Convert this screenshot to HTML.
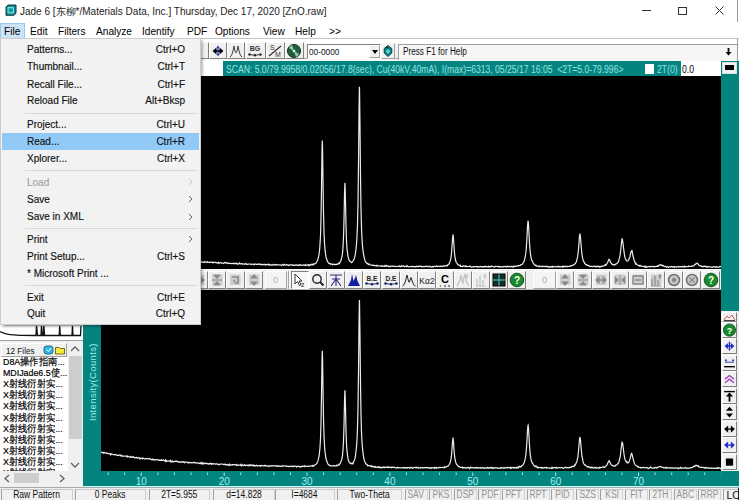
<!DOCTYPE html>
<html><head><meta charset="utf-8">
<style>
*{margin:0;padding:0;box-sizing:border-box}
html,body{width:739px;height:500px;overflow:hidden;background:#fff;font-family:"Liberation Sans",sans-serif;color:#000}
.a{position:absolute}
.t{position:absolute;white-space:nowrap;line-height:1}
#title{left:0;top:0;width:739px;height:22px;background:#fff}
#menubar{left:0;top:22px;width:739px;height:17px;background:#fff}
#toolbar{left:0;top:38px;width:739px;height:23px;background:linear-gradient(#fff 0,#fff 5px,#f0f0f0 5px,#f0f0f0 20px,#f8f8f8 20px);border-top:1px solid #c4c4c4}
#frame{left:82px;top:61px;width:657px;height:426px;background:#04847f;border-left:1px solid #bff;border-bottom:1px solid #bff}
.blk{background:#000}
.btn{position:absolute;background:#f0f0f0;border:1px solid;border-color:#fff #a0a0a0 #a0a0a0 #fff}
.narrow{font-family:"Liberation Sans",sans-serif;transform-origin:0 0}
#status{left:0;top:487px;width:739px;height:13px;background:#f0f0f0;border-top:1px solid #a8a8a8}
.sb{position:absolute;top:1px;height:12px;border-left:1px solid #a0a0a0;border-right:1px solid #d0d0d0;border-top:1px solid #c8c8c8;font-size:10px;text-align:center;line-height:10px;color:#000;overflow:hidden}
.sb span{display:inline-block;transform:scaleX(0.85)}
#menu{left:0;top:38px;width:201px;height:287px;background:#f2f2f2;border:1px solid #cccccc;box-shadow:2px 2px 2px rgba(0,0,0,0.25)}
.mi{position:absolute;left:1px;width:197px;height:17px}
.mb{font-size:11px;transform:scaleX(0.92);transform-origin:0 0}
.mt{font-size:10px;-webkit-text-stroke:0.15px currentColor}
.mi .l{position:absolute;left:26px;top:3px}
.mi .r{position:absolute;right:15px;top:3px}
.mi .ar{position:absolute;left:187px;top:3px;color:#888}
.mi.hl{background:#91c9f7}
.mi.dis{color:#a0a0a0}
.sep{position:absolute;left:24px;width:172px;height:1px;background:#d8d8d8}
</style></head>
<body>
<!-- title bar -->
<div id="title" class="a">
  <svg class="a" style="left:5px;top:4px" width="12" height="12" viewBox="0 0 12 12"><path d="M1 3L3 1H11V9L9 11.3H1Z" fill="#17858f" stroke="#0a3c44" stroke-width="1"/><rect x="3" y="3.5" width="5.5" height="5.5" fill="#2ab0b8" stroke="#8ee" stroke-width="0.8"/><path d="M4.5 6.2H7" stroke="#0a5c64" stroke-width="1"/></svg>
  <div class="t" style="left:20px;top:7px;font-size:10px;color:#222">Jade 6 [东柳*/Materials Data, Inc.] Thursday, Dec 17, 2020 [ZnO.raw]</div>
  <div class="a" style="left:642px;top:10px;width:9px;height:1px;background:#333"></div>
  <div class="a" style="left:678px;top:7px;width:9px;height:8px;border:1px solid #333"></div>
  <svg class="a" style="left:715px;top:6px" width="9" height="9" viewBox="0 0 9 9"><path d="M0.5 0.5L8.5 8.5M8.5 0.5L0.5 8.5" stroke="#333" stroke-width="1"/></svg>
  <div class="a" style="left:737px;top:0;width:1px;height:61px;background:#9a9a9a"></div>
</div>
<!-- menu bar -->
<div id="menubar" class="a">
  <div class="a" style="left:0;top:1px;width:25px;height:16px;background:#cce4f7;border:1px solid #99c9ef"></div>
  <div class="t mb" style="left:4.0px;top:3.5px">File</div>
  <div class="t mb" style="left:29.5px;top:3.5px">Edit</div>
  <div class="t mb" style="left:58.3px;top:3.5px">Filters</div>
  <div class="t mb" style="left:95.8px;top:3.5px">Analyze</div>
  <div class="t mb" style="left:142.1px;top:3.5px">Identify</div>
  <div class="t mb" style="left:187.4px;top:3.5px">PDF</div>
  <div class="t mb" style="left:215.4px;top:3.5px">Options</div>
  <div class="t mb" style="left:263.0px;top:3.5px">View</div>
  <div class="t mb" style="left:295.4px;top:3.5px">Help</div>
  <div class="t mb" style="left:328.9px;top:3.5px">&gt;&gt;</div>
</div>
<!-- toolbar -->
<div id="toolbar" class="a">
  <div class="a" style="left:0;top:19px;width:737px;height:1px;background:#a8a8a8"></div><div class="a" style="left:737px;top:0;width:1px;height:22px;background:#9a9a9a"></div><div class="a" style="left:738px;top:0;width:1px;height:22px;background:#fff"></div>
  <div class="a" style="left:197px;top:3px;width:12px;height:17px;background:#f0f0f0;border:1px solid;border-color:#fff #808080 #808080 #fff"></div>
  <div class="a" style="left:209px;top:3px;width:18px;height:17px;background:#f0f0f0;border:1px solid;border-color:#fff #808080 #808080 #fff"></div><svg class="a" style="left:209px;top:3px" width="18" height="17" viewBox="0 0 18 17"><path d="M3.5 9L7.5 5.5V12.5Z M14.5 9L10.5 5.5V12.5Z" fill="#000"/><path d="M7 9H11" stroke="#000" stroke-width="1.8"/><path d="M9 6V12" stroke="#2030c0" stroke-width="1.2"/><path d="M9 3.5L7.5 6H10.5Z M9 14.5L7.5 12H10.5Z" fill="#2030c0"/></svg>
  <div class="a" style="left:227px;top:3px;width:18px;height:17px;background:#f0f0f0;border:1px solid;border-color:#fff #808080 #808080 #fff"></div><svg class="a" style="left:227px;top:3px" width="18" height="17" viewBox="0 0 18 17"><path d="M3 15Q5 14 6 9L7 4L8 9Q8.5 11 9 11Q9.5 11 10 9L11 4L12 9Q13 14 15 15" fill="none" stroke="#444" stroke-width="1"/></svg>
  <div class="a" style="left:246px;top:3px;width:20px;height:17px;background:#f0f0f0;border:1px solid;border-color:#fff #808080 #808080 #fff"></div><svg class="a" style="left:246px;top:3px" width="20" height="17" viewBox="0 0 20 17"><text x="9" y="9" font-family="Liberation Sans" font-size="7" font-weight="bold" fill="#333" text-anchor="middle">BG</text><path d="M3.5 12.5L9 13.3L14.5 12.5" stroke="#222" stroke-width="0.9" fill="none"/><circle cx="3.5" cy="12.5" r="1.2" fill="#222"/><circle cx="9" cy="13.3" r="1.2" fill="#222"/><circle cx="14.5" cy="12.5" r="1.2" fill="#222"/></svg>
  <div class="a" style="left:266px;top:3px;width:19px;height:17px;background:#f0f0f0;border:1px solid;border-color:#fff #808080 #808080 #fff"></div><svg class="a" style="left:266px;top:3px" width="19" height="17" viewBox="0 0 19 17"><text x="4" y="8" font-family="Liberation Sans" font-size="7" fill="#333">S</text><text x="9" y="15" font-family="Liberation Sans" font-size="7" fill="#333">M</text><path d="M3 14L15 4" stroke="#333" stroke-width="1.2"/></svg>
  <div class="a" style="left:285px;top:3px;width:19px;height:17px;background:#f0f0f0;border:1px solid;border-color:#fff #808080 #808080 #fff"></div><svg class="a" style="left:285px;top:3px" width="19" height="17" viewBox="0 0 19 17"><circle cx="9" cy="9" r="6.5" fill="#1f5f3a" stroke="#0b2e1a" stroke-width="1"/><path d="M9 9L4 6A6 6 0 0 1 7 3Z M9 9L14 12A6 6 0 0 1 11 15Z" fill="#9cc8b0"/><circle cx="9" cy="9" r="1.3" fill="#dfe"/></svg>
  <div class="a" style="left:307px;top:5px;width:74px;height:15px;background:#fff;border:1px solid;border-color:#808080 #fff #fff #808080"></div>
  <div class="t" style="left:309px;top:9px;font-size:9px;color:#111;transform:scaleX(0.92);transform-origin:0 0">00-0000</div>
  <div class="btn" style="left:369px;top:6px;width:11px;height:13px"></div>
  <div class="a" style="left:372px;top:11px;width:0;height:0;border-left:3px solid transparent;border-right:3px solid transparent;border-top:4px solid #000"></div>
    <div class="btn" style="left:381px;top:4px;width:14px;height:16px"></div>
  <svg class="a" style="left:383px;top:6px" width="10" height="12" viewBox="0 0 10 12"><path d="M5 0.5L8.8 3.5L8.8 8L5 11.5L1.2 8L1.2 3.5Z" fill="#0c8585" stroke="#053d3d" stroke-width="0.9"/><path d="M5 3.5L7 6.5L5 9L3 6.5Z" fill="#5ee0d8"/><path d="M3 3L5 1.2L5 3.5Z" fill="#000"/></svg>
  <div class="a" style="left:398px;top:5px;width:339px;height:16px;background:#f6f6f6;border-top:1px solid #a0a0a0;border-left:1px solid #a0a0a0"></div>
  <div class="t" style="left:402.5px;top:8px;font-size:10px;color:#111;transform:scaleX(0.82);transform-origin:0 0">Press F1 for Help</div>
  <svg class="a" style="left:725px;top:9px" width="7" height="8" viewBox="0 0 7 8"><path d="M3.5 0V5" stroke="#000" stroke-width="1.8"/><path d="M0.5 4L3.5 7.5L6.5 4Z" fill="#000"/></svg>
</div>
<!-- main teal frame -->
<div id="frame" class="a"></div>
<!-- upper chart -->
<div class="a" style="left:201px;top:61px;width:22px;height:15px;background:#fff"></div>
<div class="a" style="left:223px;top:61px;width:498px;height:15px;background:#04847f"></div>
<div class="t" style="left:226px;top:65px;font-size:10px;color:#96e2e2;transform:scaleX(0.86);transform-origin:0 0">SCAN: 5.0/79.9958/0.02056/17.8(sec), Cu(40kV,40mA), I(max)=6313, 05/25/17 16:05&nbsp; &lt;2T=5.0-79.996&gt;</div>
<div class="a" style="left:645px;top:64px;width:9px;height:10px;background:#fff"></div>
<div class="t" style="left:657px;top:65px;font-size:10px;color:#96e2e2;transform:scaleX(0.86);transform-origin:0 0">2T(0)</div>
<div class="a" style="left:681px;top:61px;width:40px;height:15px;background:#fff"></div>
<div class="t" style="left:682px;top:65px;font-size:10px;color:#000;transform:scaleX(0.86);transform-origin:0 0">0.0</div>
<div class="a" style="left:722px;top:62px;width:15px;height:12px;background:#f0f0f0;border:1px solid #ddd"></div>
<div class="a" style="left:725px;top:65px;width:9px;height:5px;background:#000"></div>
<div class="a blk" style="left:101px;top:76px;width:620px;height:193px"></div>
<!-- mid toolbar -->
<div class="a" style="left:101px;top:269px;width:620px;height:21px;background:#f0f0f0;border-top:1px solid #fff;border-bottom:1px solid #b8b8b8"></div>
<div class="a" style="left:190px;top:271px;width:18px;height:18px;background:#f0f0f0;border:1px solid;border-color:#fff #808080 #808080 #fff"></div><svg class="a" style="left:190px;top:271px" width="18" height="18" viewBox="0 0 18 18"><rect x="4" y="3.5" width="10.5" height="10.5" fill="#cdcdcd"/><path d="M3 9L7.5 5V13Z M15 9L10.5 5V13Z" fill="#8a8a8a"/><path d="M7 9H11" stroke="#8a8a8a" stroke-width="1.5"/></svg>
<div class="a" style="left:208px;top:271px;width:18px;height:18px;background:#f0f0f0;border:1px solid;border-color:#fff #808080 #808080 #fff"></div><svg class="a" style="left:208px;top:271px" width="18" height="18" viewBox="0 0 18 18"><rect x="4" y="3.5" width="10.5" height="10.5" fill="#cdcdcd"/><path d="M9 8L5 3.5H13Z M9 10L5 14.5H13Z" fill="#8a8a8a"/><path d="M4 9H14" stroke="#8a8a8a" stroke-width="1"/></svg>
<div class="a" style="left:226px;top:271px;width:19px;height:18px;background:#f0f0f0;border:1px solid;border-color:#fff #808080 #808080 #fff"></div><svg class="a" style="left:226px;top:271px" width="19" height="18" viewBox="0 0 19 18"><rect x="4" y="3.5" width="10.5" height="10.5" fill="#cdcdcd"/><path d="M6 6H12V12H9" fill="none" stroke="#8a8a8a" stroke-width="1.6"/><path d="M7 10L9 8V12Z" fill="#8a8a8a"/></svg>
<div class="a" style="left:245px;top:271px;width:18px;height:18px;background:#f0f0f0;border:1px solid;border-color:#fff #808080 #808080 #fff"></div><svg class="a" style="left:245px;top:271px" width="18" height="18" viewBox="0 0 18 18"><rect x="4" y="3.5" width="10.5" height="10.5" fill="#cdcdcd"/><path d="M9 3L5 7.5H13Z M9 15L5 10.5H13Z" fill="#8a8a8a"/></svg>
<div class="a" style="left:265px;top:271px;width:22px;height:18px;background:#f4f4f4;border:1px solid;border-color:#fff #a0a0a0 #a0a0a0 #fff"></div><div class="t" style="left:273px;top:276px;font-size:9px;color:#b0b0b0">0</div>
<div class="a" style="left:288px;top:271px;width:1px;height:18px;background:#a0a0a0"></div><div class="a" style="left:289px;top:271px;width:1px;height:18px;background:#fff"></div>
<div class="a" style="left:291px;top:271px;width:18px;height:18px;background:#f8f8f8;border:1px solid;border-color:#808080 #fff #fff #808080"></div><svg class="a" style="left:291px;top:271px" width="18" height="18" viewBox="0 0 18 18"><path d="M4 3L4 13L6.5 10.5L8.5 14.5L10 13.8L8 10L11 10Z" fill="#fff" stroke="#222" stroke-width="0.9"/><text x="10" y="16" font-family="Liberation Sans" font-size="7" fill="#222">z</text></svg>
<div class="a" style="left:309px;top:271px;width:18px;height:18px;background:#f0f0f0;border:1px solid;border-color:#fff #808080 #808080 #fff"></div><svg class="a" style="left:309px;top:271px" width="18" height="18" viewBox="0 0 18 18"><circle cx="8" cy="8" r="4.2" fill="none" stroke="#222" stroke-width="1.4"/><path d="M11 11L14.5 14.5" stroke="#222" stroke-width="2"/></svg>
<div class="a" style="left:327px;top:271px;width:18px;height:18px;background:#f0f0f0;border:1px solid;border-color:#fff #808080 #808080 #fff"></div><svg class="a" style="left:327px;top:271px" width="18" height="18" viewBox="0 0 18 18"><path d="M3 4H15M9 4V15M9 8L4 15M9 8L14 15M5 8H13" stroke="#2a2a80" stroke-width="1.1" fill="none"/></svg>
<div class="a" style="left:345px;top:271px;width:18px;height:18px;background:#f0f0f0;border:1px solid;border-color:#fff #808080 #808080 #fff"></div><svg class="a" style="left:345px;top:271px" width="18" height="18" viewBox="0 0 18 18"><path d="M3 15L6 9L7 3L8.5 10L10 7L11 4L12.5 10L15 15Z" fill="#1020a0"/></svg>
<div class="a" style="left:363px;top:271px;width:18px;height:18px;background:#f0f0f0;border:1px solid;border-color:#fff #808080 #808080 #fff"></div><svg class="a" style="left:363px;top:271px" width="18" height="18" viewBox="0 0 18 18"><text x="9" y="10" font-family="Liberation Sans" font-size="6.5" font-weight="bold" fill="#222" text-anchor="middle">B.E</text><path d="M3.5 12.5L9 13.3L14.5 12.5" stroke="#101860" stroke-width="0.9" fill="none"/><circle cx="3.5" cy="12.5" r="1.2" fill="#101860"/><circle cx="9" cy="13.3" r="1.2" fill="#101860"/><circle cx="14.5" cy="12.5" r="1.2" fill="#101860"/></svg>
<div class="a" style="left:382px;top:271px;width:18px;height:18px;background:#f0f0f0;border:1px solid;border-color:#fff #808080 #808080 #fff"></div><svg class="a" style="left:382px;top:271px" width="18" height="18" viewBox="0 0 18 18"><text x="9" y="10" font-family="Liberation Sans" font-size="6.5" font-weight="bold" fill="#222" text-anchor="middle">D.E</text><path d="M3.5 12.5L9 13.3L14.5 12.5" stroke="#101860" stroke-width="0.9" fill="none"/><circle cx="3.5" cy="12.5" r="1.2" fill="#101860"/><circle cx="9" cy="13.3" r="1.2" fill="#101860"/><circle cx="14.5" cy="12.5" r="1.2" fill="#101860"/></svg>
<div class="a" style="left:400px;top:271px;width:18px;height:18px;background:#f0f0f0;border:1px solid;border-color:#fff #808080 #808080 #fff"></div><svg class="a" style="left:400px;top:271px" width="18" height="18" viewBox="0 0 18 18"><path d="M2.5 15Q4.5 14.5 5.5 10L7 4L8.5 10Q9 12 9.5 11L11 6.5L12.5 11Q13.5 14.5 15.5 15" fill="none" stroke="#222" stroke-width="1"/></svg>
<div class="a" style="left:418px;top:271px;width:18px;height:18px;background:#f0f0f0;border:1px solid;border-color:#fff #808080 #808080 #fff"></div><svg class="a" style="left:418px;top:271px" width="18" height="18" viewBox="0 0 18 18"><text x="9" y="12.5" font-family="Liberation Sans" font-size="8.5" fill="#222" text-anchor="middle">Kα2</text></svg>
<div class="a" style="left:436px;top:271px;width:18px;height:18px;background:#f0f0f0;border:1px solid;border-color:#fff #808080 #808080 #fff"></div><svg class="a" style="left:436px;top:271px" width="18" height="18" viewBox="0 0 18 18"><text x="9" y="12" font-family="Liberation Sans" font-size="11" font-weight="bold" fill="#000" text-anchor="middle">C</text><path d="M4 15H5M8 15H10M12 15H14" stroke="#222" stroke-width="1"/></svg>
<div class="a" style="left:454px;top:271px;width:18px;height:18px;background:#f0f0f0;border:1px solid;border-color:#fff #808080 #808080 #fff"></div><svg class="a" style="left:454px;top:271px" width="18" height="18" viewBox="0 0 18 18"><path d="M3 15L6 9L7 4L8 10L9 12L10 6L11 3L12 10L15 15" fill="none" stroke="#c0c0c0" stroke-width="1.2"/><path d="M13 3V8M11.5 5H14.5" stroke="#c0c0c0" stroke-width="1"/></svg>
<div class="a" style="left:472px;top:271px;width:18px;height:18px;background:#f0f0f0;border:1px solid;border-color:#fff #808080 #808080 #fff"></div><svg class="a" style="left:472px;top:271px" width="18" height="18" viewBox="0 0 18 18"><path d="M4 15H14M5 15V8M8 15V5M11 15V9M13 3V8M11.5 5H14.5" stroke="#c0c0c0" stroke-width="1.2" fill="none"/></svg>
<div class="a" style="left:490px;top:271px;width:18px;height:18px;background:#f0f0f0;border:1px solid;border-color:#fff #808080 #808080 #fff"></div><svg class="a" style="left:490px;top:271px" width="18" height="18" viewBox="0 0 18 18"><rect x="3" y="3" width="12" height="12" fill="#10302a" stroke="#000"/><path d="M9 3V15M3 9H15" stroke="#5cc" stroke-width="1"/></svg>
<div class="a" style="left:508px;top:271px;width:18px;height:18px;background:#f0f0f0;border:1px solid;border-color:#fff #808080 #808080 #fff"></div><svg class="a" style="left:508px;top:271px" width="18" height="18" viewBox="0 0 18 18"><circle cx="9" cy="9" r="6.8" fill="#178a2a" stroke="#0a3a10" stroke-width="0.8"/><text x="9" y="13" font-family="Liberation Sans" font-size="10" font-weight="bold" fill="#fff" text-anchor="middle">?</text></svg>
<div class="a" style="left:533px;top:271px;width:23px;height:18px;background:#f4f4f4;border:1px solid;border-color:#fff #a0a0a0 #a0a0a0 #fff"></div><div class="t" style="left:542px;top:276px;font-size:9px;color:#b0b0b0">0</div>
<div class="a" style="left:556px;top:271px;width:18px;height:18px;background:#f0f0f0;border:1px solid;border-color:#fff #808080 #808080 #fff"></div><svg class="a" style="left:556px;top:271px" width="18" height="18" viewBox="0 0 18 18"><rect x="4" y="3.5" width="10.5" height="10.5" fill="#cdcdcd"/><path d="M9 3L5 7.5H13Z M9 15L5 10.5H13Z" fill="#8a8a8a"/></svg>
<div class="a" style="left:574px;top:271px;width:18px;height:18px;background:#f0f0f0;border:1px solid;border-color:#fff #808080 #808080 #fff"></div><svg class="a" style="left:574px;top:271px" width="18" height="18" viewBox="0 0 18 18"><rect x="4" y="3.5" width="10.5" height="10.5" fill="#cdcdcd"/><path d="M9 8L5 3.5H13Z M9 10L5 14.5H13Z" fill="#8a8a8a"/><path d="M4 9H14" stroke="#8a8a8a" stroke-width="1"/></svg>
<div class="a" style="left:592px;top:271px;width:18px;height:18px;background:#f0f0f0;border:1px solid;border-color:#fff #808080 #808080 #fff"></div><svg class="a" style="left:592px;top:271px" width="18" height="18" viewBox="0 0 18 18"><rect x="4" y="3.5" width="10.5" height="10.5" fill="#cdcdcd"/><path d="M3 9L7.5 5V13Z M15 9L10.5 5V13Z" fill="#8a8a8a"/><path d="M7 9H11" stroke="#8a8a8a" stroke-width="1.5"/></svg>
<div class="a" style="left:611px;top:271px;width:18px;height:18px;background:#f0f0f0;border:1px solid;border-color:#fff #808080 #808080 #fff"></div><svg class="a" style="left:611px;top:271px" width="18" height="18" viewBox="0 0 18 18"><rect x="4" y="3.5" width="10.5" height="10.5" fill="#cdcdcd"/><path d="M8 9L3.5 5V13Z M10 9L14.5 5V13Z" fill="#8a8a8a"/><path d="M9 4V14" stroke="#8a8a8a" stroke-width="1"/></svg>
<div class="a" style="left:629px;top:271px;width:18px;height:18px;background:#f0f0f0;border:1px solid;border-color:#fff #808080 #808080 #fff"></div><svg class="a" style="left:629px;top:271px" width="18" height="18" viewBox="0 0 18 18"><rect x="4" y="3.5" width="10.5" height="10.5" fill="#cdcdcd"/><rect x="4" y="5" width="10" height="8" fill="none" stroke="#8a8a8a" stroke-width="1.5"/><path d="M6 9H12" stroke="#8a8a8a" stroke-width="1.5"/></svg>
<div class="a" style="left:647px;top:271px;width:18px;height:18px;background:#f0f0f0;border:1px solid;border-color:#fff #808080 #808080 #fff"></div><svg class="a" style="left:647px;top:271px" width="18" height="18" viewBox="0 0 18 18"><rect x="4" y="3.5" width="10.5" height="10.5" fill="#cdcdcd"/><path d="M4 15H14M5 15V8M8 15V5M11 15V9M13 3V8M11.5 5H14.5" stroke="#8a8a8a" stroke-width="1.2" fill="none"/></svg>
<div class="a" style="left:665px;top:271px;width:18px;height:18px;background:#f0f0f0;border:1px solid;border-color:#fff #808080 #808080 #fff"></div><svg class="a" style="left:665px;top:271px" width="18" height="18" viewBox="0 0 18 18"><circle cx="9" cy="9" r="5.5" fill="#c8c8c8" stroke="#707070" stroke-width="1.5"/><circle cx="9" cy="9" r="2.2" fill="#888"/></svg>
<div class="a" style="left:683px;top:271px;width:18px;height:18px;background:#f0f0f0;border:1px solid;border-color:#fff #808080 #808080 #fff"></div><svg class="a" style="left:683px;top:271px" width="18" height="18" viewBox="0 0 18 18"><circle cx="9" cy="9" r="5.5" fill="#c8c8c8" stroke="#707070" stroke-width="1.5"/><path d="M6.5 6.5L11.5 11.5M11.5 6.5L6.5 11.5" stroke="#888" stroke-width="1.3"/></svg>
<div class="a" style="left:702px;top:271px;width:18px;height:18px;background:#f0f0f0;border:1px solid;border-color:#fff #808080 #808080 #fff"></div><svg class="a" style="left:702px;top:271px" width="18" height="18" viewBox="0 0 18 18"><circle cx="9" cy="9" r="6.8" fill="#178a2a" stroke="#0a3a10" stroke-width="0.8"/><text x="9" y="13" font-family="Liberation Sans" font-size="10" font-weight="bold" fill="#fff" text-anchor="middle">?</text></svg>
<!-- lower chart -->
<div class="a blk" style="left:101px;top:290px;width:620px;height:181px"></div>
<svg class="a" style="left:0;top:0" width="739" height="500">
  <polyline fill="none" stroke="#ececec" stroke-width="1.2" points="101.0,250.5 101.5,250.7 102.0,250.6 102.5,250.5 103.0,250.7 103.5,250.7 104.0,251.1 104.5,251.5 105.0,251.1 105.5,251.2 106.0,251.6 106.5,251.6 107.0,251.6 107.5,251.4 108.0,251.8 108.5,252.1 109.0,251.6 109.5,251.9 110.0,251.6 110.5,251.9 111.0,251.8 111.5,252.3 112.0,252.1 112.5,252.7 113.0,252.7 113.5,252.7 114.0,252.1 114.5,252.8 115.0,253.0 115.5,253.1 116.0,252.7 116.5,253.1 117.0,253.0 117.5,253.2 118.0,253.8 118.5,253.3 119.0,253.6 119.5,254.0 120.0,253.6 120.5,253.8 121.0,254.0 121.5,254.0 122.0,253.8 122.5,254.2 123.0,254.6 123.5,253.9 124.0,254.6 124.5,254.5 125.0,254.4 125.5,255.2 126.0,254.9 126.5,254.4 127.0,254.9 127.5,255.1 128.0,254.9 128.5,255.2 129.0,255.1 129.5,255.4 130.0,255.7 130.5,255.1 131.0,255.5 131.5,255.3 132.0,255.6 132.5,255.3 133.0,255.5 133.5,255.7 134.0,256.1 134.5,256.2 135.0,255.6 135.5,255.8 136.0,256.2 136.5,255.6 137.0,256.1 137.5,256.2 138.0,256.7 138.5,256.6 139.0,256.3 139.5,256.4 140.0,256.5 140.5,257.1 141.0,256.6 141.5,256.7 142.0,256.9 142.5,256.8 143.0,256.9 143.5,256.7 144.0,257.0 144.5,257.0 145.0,257.5 145.5,257.4 146.0,257.3 146.5,257.5 147.0,257.3 147.5,257.7 148.0,257.5 148.5,257.7 149.0,257.2 149.5,257.8 150.0,257.2 150.5,257.2 151.0,257.7 151.5,257.6 152.0,258.0 152.5,258.6 153.0,257.8 153.5,257.9 154.0,258.2 154.5,258.3 155.0,258.2 155.5,258.2 156.0,258.5 156.5,258.5 157.0,258.2 157.5,258.5 158.0,258.6 158.5,258.3 159.0,258.7 159.5,258.5 160.0,259.0 160.5,258.8 161.0,258.9 161.5,258.7 162.0,258.9 162.5,258.4 163.0,258.7 163.5,259.2 164.0,258.5 164.5,259.4 165.0,258.7 165.5,259.5 166.0,259.1 166.5,259.6 167.0,259.4 167.5,259.0 168.0,259.8 168.5,259.9 169.0,259.6 169.5,259.5 170.0,259.6 170.5,259.4 171.0,260.1 171.5,259.6 172.0,259.8 172.5,259.7 173.0,259.7 173.5,259.6 174.0,260.3 174.5,260.0 175.0,260.3 175.5,260.1 176.0,260.0 176.5,260.1 177.0,260.1 177.5,260.3 178.0,260.2 178.5,260.3 179.0,260.0 179.5,260.2 180.0,260.9 180.5,260.3 181.0,260.3 181.5,260.7 182.0,261.0 182.5,260.3 183.0,260.6 183.5,260.6 184.0,260.3 184.5,261.0 185.0,260.8 185.5,260.9 186.0,260.7 186.5,261.1 187.0,260.8 187.5,261.0 188.0,260.7 188.5,260.8 189.0,261.5 189.5,261.0 190.0,261.3 190.5,261.2 191.0,261.1 191.5,261.2 192.0,261.5 192.5,261.3 193.0,261.4 193.5,261.4 194.0,261.8 194.5,261.7 195.0,261.6 195.5,261.4 196.0,261.2 196.5,261.9 197.0,261.9 197.5,261.6 198.0,261.9 198.5,262.0 199.0,262.0 199.5,262.1 200.0,261.7 200.5,262.3 201.0,261.5 201.5,262.2 202.0,262.1 202.5,262.2 203.0,262.5 203.5,262.5 204.0,261.8 204.5,261.6 205.0,262.4 205.5,261.9 206.0,262.2 206.5,262.4 207.0,261.8 207.5,261.7 208.0,262.4 208.5,262.3 209.0,262.3 209.5,262.4 210.0,262.2 210.5,262.0 211.0,262.4 211.5,262.2 212.0,262.0 212.5,262.7 213.0,262.5 213.5,262.7 214.0,262.3 214.5,262.5 215.0,262.4 215.5,262.4 216.0,262.8 216.5,262.5 217.0,262.9 217.5,262.9 218.0,263.4 218.5,262.4 219.0,263.1 219.5,262.9 220.0,262.9 220.5,262.5 221.0,262.8 221.5,263.2 222.0,263.0 222.5,263.0 223.0,263.0 223.5,263.4 224.0,263.1 224.5,262.5 225.0,262.9 225.5,262.6 226.0,262.3 226.5,263.1 227.0,263.6 227.5,263.3 228.0,262.9 228.5,263.0 229.0,263.6 229.5,263.4 230.0,263.4 230.5,263.4 231.0,263.4 231.5,263.6 232.0,263.6 232.5,263.5 233.0,263.2 233.5,263.6 234.0,263.3 234.5,263.8 235.0,263.2 235.5,263.5 236.0,263.6 236.5,263.2 237.0,264.1 237.5,264.1 238.0,263.5 238.5,263.9 239.0,263.8 239.5,263.0 240.0,263.8 240.5,263.8 241.0,263.8 241.5,263.5 242.0,263.8 242.5,263.8 243.0,264.2 243.5,264.0 244.0,263.9 244.5,264.3 245.0,263.8 245.5,263.8 246.0,263.5 246.5,264.4 247.0,264.3 247.5,264.3 248.0,264.2 248.5,264.1 249.0,264.1 249.5,264.0 250.0,264.0 250.5,264.1 251.0,264.6 251.5,264.3 252.0,264.2 252.5,264.0 253.0,264.0 253.5,264.7 254.0,264.4 254.5,264.3 255.0,264.2 255.5,264.0 256.0,264.3 256.5,264.6 257.0,264.2 257.5,264.3 258.0,264.3 258.5,264.4 259.0,263.9 259.5,264.3 260.0,264.2 260.5,264.7 261.0,264.2 261.5,264.6 262.0,264.9 262.5,264.4 263.0,264.3 263.5,264.6 264.0,264.5 264.5,264.3 265.0,264.7 265.5,265.1 266.0,264.5 266.5,264.5 267.0,264.3 267.5,264.7 268.0,264.3 268.5,264.3 269.0,265.0 269.5,264.4 270.0,265.0 270.5,265.1 271.0,264.8 271.5,264.9 272.0,265.3 272.5,264.7 273.0,264.6 273.5,264.4 274.0,264.8 274.5,265.2 275.0,265.1 275.5,264.5 276.0,264.6 276.5,264.7 277.0,264.9 277.5,264.8 278.0,264.9 278.5,265.0 279.0,264.8 279.5,264.9 280.0,265.0 280.5,264.9 281.0,265.1 281.5,265.5 282.0,265.1 282.5,265.0 283.0,264.5 283.5,265.1 284.0,264.4 284.5,264.6 285.0,265.2 285.5,265.2 286.0,265.0 286.5,264.5 287.0,264.9 287.5,264.8 288.0,265.2 288.5,265.7 289.0,265.1 289.5,264.9 290.0,264.7 290.5,265.1 291.0,265.0 291.5,264.8 292.0,265.1 292.5,264.8 293.0,265.4 293.5,265.4 294.0,265.4 294.5,265.0 295.0,265.3 295.5,265.1 296.0,265.0 296.5,265.1 297.0,264.8 297.5,264.8 298.0,265.4 298.5,265.1 299.0,265.2 299.5,265.4 300.0,264.7 300.5,264.9 301.0,265.2 301.5,265.3 302.0,265.1 302.5,265.4 303.0,265.2 303.5,264.8 304.0,264.9 304.5,265.4 305.0,265.3 305.5,264.6 306.0,265.5 306.5,265.3 307.0,265.4 307.5,264.9 308.0,264.9 308.5,264.7 309.0,265.7 309.5,264.9 310.0,265.3 310.5,264.7 311.0,264.9 311.5,264.3 312.0,264.6 312.5,264.9 313.0,264.1 313.5,264.7 314.0,264.3 314.5,263.8 315.0,263.7 315.5,263.4 316.0,263.1 316.5,262.4 317.0,261.5 317.5,260.6 318.0,258.9 318.5,256.8 319.0,254.4 319.5,250.8 320.0,244.5 320.5,235.6 321.0,218.4 321.5,188.7 322.0,151.4 322.3,140.4 322.5,145.3 323.0,180.0 323.5,213.1 324.0,232.4 324.5,243.0 325.0,249.6 325.5,253.6 326.0,256.7 326.5,258.7 327.0,260.0 327.5,261.4 328.0,262.3 328.5,263.2 329.0,263.1 329.5,263.7 330.0,263.5 330.5,264.3 331.0,264.0 331.5,263.9 332.0,264.4 332.5,264.8 333.0,264.1 333.5,264.3 334.0,264.4 334.5,264.3 335.0,264.7 335.5,264.3 336.0,264.3 336.5,264.6 337.0,264.1 337.5,264.3 338.0,263.8 338.5,263.5 339.0,262.9 339.5,263.5 340.0,262.2 340.5,261.5 341.0,260.2 341.5,258.5 342.0,256.2 342.5,253.3 343.0,247.1 343.5,237.3 344.0,220.1 344.5,195.0 344.9,182.9 345.0,183.3 345.5,202.1 346.0,225.6 346.5,240.7 347.0,249.3 347.5,252.7 348.0,256.6 348.5,258.1 349.0,260.2 349.5,260.6 350.0,261.5 350.5,261.6 351.0,262.0 351.5,262.7 352.0,262.4 352.5,261.8 353.0,261.1 353.5,260.1 354.0,259.4 354.5,257.9 355.0,255.8 355.5,253.0 356.0,248.9 356.5,243.9 357.0,236.2 357.5,224.2 358.0,202.4 358.5,164.2 359.0,112.0 359.4,86.8 359.5,87.4 360.0,126.0 360.5,176.1 361.0,208.9 361.5,228.2 362.0,238.9 362.5,245.9 363.0,250.7 363.5,254.1 364.0,256.7 364.5,259.0 365.0,260.4 365.5,261.7 366.0,262.5 366.5,262.7 367.0,263.6 367.5,263.5 368.0,264.0 368.5,264.4 369.0,264.0 369.5,264.8 370.0,265.0 370.5,265.0 371.0,265.0 371.5,265.1 372.0,265.0 372.5,265.3 373.0,265.3 373.5,265.5 374.0,265.2 374.5,265.7 375.0,265.7 375.5,265.7 376.0,265.6 376.5,265.9 377.0,265.3 377.5,266.0 378.0,265.9 378.5,266.0 379.0,266.0 379.5,265.8 380.0,265.9 380.5,266.2 381.0,266.1 381.5,266.1 382.0,265.6 382.5,266.2 383.0,266.4 383.5,266.4 384.0,266.2 384.5,265.7 385.0,266.4 385.5,266.1 386.0,265.4 386.5,266.3 387.0,265.8 387.5,265.8 388.0,266.0 388.5,266.6 389.0,266.1 389.5,266.3 390.0,266.7 390.5,266.7 391.0,266.2 391.5,266.2 392.0,265.9 392.5,266.1 393.0,266.4 393.5,266.4 394.0,266.3 394.5,266.6 395.0,266.1 395.5,266.3 396.0,266.5 396.5,266.5 397.0,266.6 397.5,266.5 398.0,266.3 398.5,266.5 399.0,266.1 399.5,265.9 400.0,266.5 400.5,266.4 401.0,266.5 401.5,265.9 402.0,266.3 402.5,266.2 403.0,266.2 403.5,265.8 404.0,266.3 404.5,266.7 405.0,266.5 405.5,266.3 406.0,266.4 406.5,266.6 407.0,265.7 407.5,266.4 408.0,266.6 408.5,266.6 409.0,266.9 409.5,266.8 410.0,266.5 410.5,266.5 411.0,266.7 411.5,266.3 412.0,266.5 412.5,266.7 413.0,267.0 413.5,266.4 414.0,266.5 414.5,266.5 415.0,266.9 415.5,266.5 416.0,266.9 416.5,266.2 417.0,266.4 417.5,266.4 418.0,266.7 418.5,266.8 419.0,266.1 419.5,266.3 420.0,266.6 420.5,266.3 421.0,266.1 421.5,266.8 422.0,266.7 422.5,266.7 423.0,266.4 423.5,266.8 424.0,266.5 424.5,266.8 425.0,266.3 425.5,266.3 426.0,266.6 426.5,266.3 427.0,266.7 427.5,266.6 428.0,266.3 428.5,266.6 429.0,266.4 429.5,266.8 430.0,266.4 430.5,266.4 431.0,266.9 431.5,267.2 432.0,267.1 432.5,266.5 433.0,266.6 433.5,266.9 434.0,266.5 434.5,266.2 435.0,266.5 435.5,266.6 436.0,266.3 436.5,266.0 437.0,266.1 437.5,266.7 438.0,266.3 438.5,266.4 439.0,266.5 439.5,266.6 440.0,266.3 440.5,266.6 441.0,266.1 441.5,266.3 442.0,266.1 442.5,266.6 443.0,266.3 443.5,266.0 444.0,266.1 444.5,266.1 445.0,266.2 445.5,265.5 446.0,265.5 446.5,265.5 447.0,266.1 447.5,265.3 448.0,264.6 448.5,264.4 449.0,264.1 449.5,262.6 450.0,261.4 450.5,260.2 451.0,257.3 451.5,253.1 452.0,246.2 452.5,238.9 453.0,234.7 453.0,234.4 453.5,238.8 454.0,246.0 454.5,253.2 455.0,257.2 455.5,260.0 456.0,261.8 456.5,262.6 457.0,263.1 457.5,264.3 458.0,264.5 458.5,265.0 459.0,265.2 459.5,265.5 460.0,265.2 460.5,266.3 461.0,266.2 461.5,266.5 462.0,266.8 462.5,266.3 463.0,265.8 463.5,266.1 464.0,266.1 464.5,266.3 465.0,266.5 465.5,265.9 466.0,266.6 466.5,266.1 467.0,266.6 467.5,266.5 468.0,266.5 468.5,266.6 469.0,266.4 469.5,266.4 470.0,266.1 470.5,266.6 471.0,267.1 471.5,267.2 472.0,267.0 472.5,266.8 473.0,266.5 473.5,267.1 474.0,266.6 474.5,266.6 475.0,266.6 475.5,266.7 476.0,266.6 476.5,266.7 477.0,266.4 477.5,266.6 478.0,267.3 478.5,266.7 479.0,266.6 479.5,266.8 480.0,266.9 480.5,266.4 481.0,266.6 481.5,267.0 482.0,266.8 482.5,266.7 483.0,267.1 483.5,266.5 484.0,266.7 484.5,266.6 485.0,267.1 485.5,266.2 486.0,266.5 486.5,266.6 487.0,266.9 487.5,266.9 488.0,267.1 488.5,266.3 489.0,266.9 489.5,266.6 490.0,266.5 490.5,266.9 491.0,266.5 491.5,266.1 492.0,266.6 492.5,266.3 493.0,266.5 493.5,266.8 494.0,266.8 494.5,267.2 495.0,266.7 495.5,266.3 496.0,266.5 496.5,266.5 497.0,266.4 497.5,266.8 498.0,266.5 498.5,266.2 499.0,266.9 499.5,266.7 500.0,266.8 500.5,266.7 501.0,266.9 501.5,266.7 502.0,267.0 502.5,266.8 503.0,266.8 503.5,266.8 504.0,266.3 504.5,266.6 505.0,266.6 505.5,266.7 506.0,266.3 506.5,267.1 507.0,266.7 507.5,266.3 508.0,266.2 508.5,266.6 509.0,266.6 509.5,266.4 510.0,266.6 510.5,266.4 511.0,266.7 511.5,266.4 512.0,266.5 512.5,266.8 513.0,267.2 513.5,266.2 514.0,266.3 514.5,266.2 515.0,266.6 515.5,266.1 516.0,266.2 516.5,266.3 517.0,266.0 517.5,265.9 518.0,266.0 518.5,265.4 519.0,265.5 519.5,265.6 520.0,265.6 520.5,265.3 521.0,264.5 521.5,264.5 522.0,264.5 522.5,263.8 523.0,263.0 523.5,262.0 524.0,261.4 524.5,259.7 525.0,257.6 525.5,255.0 526.0,251.5 526.5,245.1 527.0,236.8 527.5,226.6 528.0,221.2 528.1,220.7 528.5,224.3 529.0,234.3 529.5,242.9 530.0,249.4 530.5,254.2 531.0,257.3 531.5,259.7 532.0,260.7 532.5,261.4 533.0,262.7 533.5,263.5 534.0,264.1 534.5,264.9 535.0,265.0 535.5,265.5 536.0,265.2 536.5,265.9 537.0,266.4 537.5,266.2 538.0,266.1 538.5,266.2 539.0,266.7 539.5,266.0 540.0,266.3 540.5,266.5 541.0,266.6 541.5,266.3 542.0,266.6 542.5,266.4 543.0,266.6 543.5,266.5 544.0,266.2 544.5,266.6 545.0,266.8 545.5,266.3 546.0,266.5 546.5,266.8 547.0,266.3 547.5,266.7 548.0,266.4 548.5,267.0 549.0,267.3 549.5,267.2 550.0,266.6 550.5,266.9 551.0,266.7 551.5,266.7 552.0,267.1 552.5,266.3 553.0,267.0 553.5,266.7 554.0,267.1 554.5,266.7 555.0,266.5 555.5,266.8 556.0,266.9 556.5,266.7 557.0,266.8 557.5,266.5 558.0,266.1 558.5,266.9 559.0,266.9 559.5,266.7 560.0,266.7 560.5,267.0 561.0,266.5 561.5,266.5 562.0,266.6 562.5,267.0 563.0,266.2 563.5,266.9 564.0,266.4 564.5,266.3 565.0,266.9 565.5,266.5 566.0,266.2 566.5,266.4 567.0,266.7 567.5,266.8 568.0,266.3 568.5,266.5 569.0,266.5 569.5,266.1 570.0,266.3 570.5,266.1 571.0,265.8 571.5,265.7 572.0,265.7 572.5,265.5 573.0,265.1 573.5,264.8 574.0,264.9 574.5,264.2 575.0,263.8 575.5,263.3 576.0,262.2 576.5,261.5 577.0,259.1 577.5,257.2 578.0,253.5 578.5,249.2 579.0,242.9 579.5,235.7 580.0,233.6 580.0,234.1 580.5,237.5 581.0,243.9 581.5,249.7 582.0,254.4 582.5,257.7 583.0,259.6 583.5,261.4 584.0,261.6 584.5,263.2 585.0,263.4 585.5,264.5 586.0,264.6 586.5,264.7 587.0,265.4 587.5,265.2 588.0,265.4 588.5,265.4 589.0,266.0 589.5,266.2 590.0,266.5 590.5,266.2 591.0,266.6 591.5,266.3 592.0,266.3 592.5,266.6 593.0,266.7 593.5,266.3 594.0,266.4 594.5,266.4 595.0,266.5 595.5,266.2 596.0,266.8 596.5,266.4 597.0,266.6 597.5,266.3 598.0,266.6 598.5,266.6 599.0,266.3 599.5,267.0 600.0,266.5 600.5,266.9 601.0,266.6 601.5,266.1 602.0,266.1 602.5,266.3 603.0,266.1 603.5,266.0 604.0,265.8 604.5,265.2 605.0,265.4 605.5,264.6 606.0,265.0 606.5,264.2 607.0,263.5 607.5,262.8 608.0,261.8 608.5,260.1 609.0,259.4 609.1,259.5 609.5,259.5 610.0,260.7 610.5,262.6 611.0,262.8 611.5,263.9 612.0,263.8 612.5,264.6 613.0,264.6 613.5,264.7 614.0,264.9 614.5,265.1 615.0,264.6 615.5,264.4 616.0,263.8 616.5,263.9 617.0,263.2 617.5,263.0 618.0,262.1 618.5,261.6 619.0,259.3 619.5,257.9 620.0,255.7 620.5,251.8 621.0,247.2 621.5,242.6 622.0,238.9 622.2,238.9 622.5,240.2 623.0,243.4 623.5,247.5 624.0,251.7 624.5,255.1 625.0,257.7 625.5,258.8 626.0,259.8 626.5,260.9 627.0,261.2 627.5,261.0 628.0,260.6 628.5,260.0 629.0,259.4 629.5,257.7 630.0,256.7 630.5,254.0 631.0,252.0 631.5,250.9 631.7,250.7 632.0,250.6 632.5,253.3 633.0,256.0 633.5,257.9 634.0,259.8 634.5,261.5 635.0,262.1 635.5,263.8 636.0,263.3 636.5,264.1 637.0,264.7 637.5,265.0 638.0,265.3 638.5,265.6 639.0,265.6 639.5,266.1 640.0,265.4 640.5,266.1 641.0,266.0 641.5,266.3 642.0,266.4 642.5,266.1 643.0,266.2 643.5,266.7 644.0,266.6 644.5,266.3 645.0,267.1 645.5,267.2 646.0,266.2 646.5,266.7 647.0,267.3 647.5,266.9 648.0,266.7 648.5,266.6 649.0,266.5 649.5,266.6 650.0,266.5 650.5,266.9 651.0,266.6 651.5,266.5 652.0,266.3 652.5,266.6 653.0,266.4 653.5,266.6 654.0,266.9 654.5,266.7 655.0,266.7 655.5,266.6 656.0,266.4 656.5,266.3 657.0,266.2 657.5,266.3 658.0,265.6 658.5,266.1 659.0,265.4 659.5,264.9 660.0,264.8 660.3,264.7 660.5,264.9 661.0,264.8 661.5,265.6 662.0,265.4 662.5,265.2 663.0,265.9 663.5,265.7 664.0,266.4 664.5,266.7 665.0,266.7 665.5,266.2 666.0,266.4 666.5,267.2 667.0,266.8 667.5,266.7 668.0,267.0 668.5,267.4 669.0,267.1 669.5,266.8 670.0,266.9 670.5,267.0 671.0,266.6 671.5,266.5 672.0,266.8 672.5,266.6 673.0,266.8 673.5,266.9 674.0,267.5 674.5,266.6 675.0,266.8 675.5,266.8 676.0,267.0 676.5,267.2 677.0,266.7 677.5,266.6 678.0,266.4 678.5,266.6 679.0,267.0 679.5,266.9 680.0,266.6 680.5,266.7 681.0,266.9 681.5,267.0 682.0,266.7 682.5,266.8 683.0,266.3 683.5,266.5 684.0,267.2 684.5,266.2 685.0,266.7 685.5,266.8 686.0,266.6 686.5,266.5 687.0,266.7 687.5,266.7 688.0,266.6 688.5,266.1 689.0,266.5 689.5,266.3 690.0,266.3 690.5,266.5 691.0,266.5 691.5,266.5 692.0,266.0 692.5,266.2 693.0,266.1 693.5,265.9 694.0,265.7 694.5,264.9 695.0,264.5 695.5,264.4 696.0,263.4 696.5,263.6 696.7,263.4 697.0,263.5 697.5,263.3 698.0,263.9 698.5,264.6 699.0,265.2 699.5,265.6 700.0,265.6 700.5,265.8 701.0,265.8 701.5,266.3 702.0,266.2 702.5,266.5 703.0,266.9 703.5,266.5 704.0,266.1 704.5,266.3 705.0,266.2 705.5,266.3 706.0,267.1 706.5,266.8 707.0,266.3 707.5,266.9 708.0,267.1 708.5,266.7 709.0,266.6 709.5,266.7 710.0,266.9 710.5,267.0 711.0,267.2 711.5,267.2 712.0,267.2 712.5,267.3 713.0,267.1 713.5,266.5 714.0,266.9 714.5,267.0 715.0,266.8 715.5,267.2 716.0,266.8 716.5,266.7 717.0,267.3 717.5,267.1 718.0,267.0 718.5,267.2 719.0,267.2 719.5,267.0 720.0,266.2 720.5,266.7 721.0,266.8"/>
  <polyline fill="none" stroke="#ececec" stroke-width="1.2" points="101.0,451.9 101.5,452.3 102.0,452.7 102.5,452.3 103.0,452.2 103.5,453.2 104.0,452.6 104.5,452.5 105.0,453.0 105.5,453.1 106.0,452.9 106.5,453.4 107.0,453.1 107.5,453.1 108.0,453.5 108.5,453.8 109.0,453.5 109.5,453.8 110.0,453.8 110.5,454.7 111.0,453.8 111.5,454.4 112.0,454.1 112.5,454.2 113.0,454.5 113.5,454.6 114.0,454.8 114.5,454.6 115.0,454.5 115.5,454.6 116.0,454.9 116.5,455.0 117.0,455.3 117.5,455.1 118.0,455.4 118.5,455.6 119.0,455.3 119.5,454.9 120.0,455.1 120.5,455.1 121.0,456.0 121.5,455.4 122.0,456.0 122.5,455.9 123.0,456.3 123.5,456.2 124.0,456.0 124.5,456.0 125.0,456.2 125.5,456.2 126.0,456.1 126.5,456.3 127.0,456.9 127.5,456.0 128.0,456.6 128.5,456.4 129.0,456.7 129.5,457.0 130.0,456.8 130.5,457.1 131.0,456.5 131.5,457.3 132.0,456.9 132.5,457.3 133.0,457.3 133.5,456.6 134.0,457.1 134.5,457.5 135.0,457.9 135.5,457.6 136.0,457.7 136.5,457.3 137.0,458.1 137.5,458.3 138.0,457.8 138.5,457.8 139.0,457.5 139.5,458.3 140.0,458.8 140.5,458.3 141.0,458.6 141.5,458.4 142.0,458.0 142.5,458.7 143.0,458.1 143.5,458.4 144.0,458.6 144.5,458.8 145.0,458.8 145.5,458.8 146.0,458.6 146.5,458.5 147.0,458.9 147.5,458.7 148.0,458.6 148.5,458.7 149.0,459.0 149.5,458.6 150.0,458.8 150.5,458.8 151.0,459.4 151.5,459.5 152.0,460.0 152.5,459.0 153.0,459.3 153.5,459.8 154.0,459.6 154.5,459.6 155.0,460.2 155.5,459.7 156.0,459.5 156.5,459.5 157.0,460.0 157.5,460.0 158.0,459.6 158.5,459.8 159.0,460.3 159.5,460.3 160.0,460.0 160.5,460.4 161.0,460.5 161.5,459.8 162.0,460.3 162.5,460.5 163.0,460.3 163.5,459.9 164.0,460.5 164.5,460.8 165.0,461.1 165.5,460.1 166.0,461.5 166.5,460.5 167.0,461.1 167.5,461.2 168.0,461.2 168.5,461.0 169.0,460.7 169.5,461.2 170.0,460.9 170.5,460.4 171.0,462.0 171.5,461.4 172.0,461.8 172.5,461.0 173.0,461.7 173.5,461.8 174.0,461.8 174.5,461.4 175.0,461.2 175.5,461.5 176.0,461.0 176.5,461.1 177.0,461.7 177.5,461.4 178.0,461.7 178.5,461.7 179.0,462.3 179.5,462.2 180.0,461.9 180.5,462.2 181.0,461.7 181.5,461.9 182.0,462.3 182.5,461.7 183.0,462.0 183.5,461.8 184.0,462.2 184.5,462.7 185.0,462.0 185.5,462.3 186.0,462.0 186.5,462.0 187.0,462.0 187.5,462.8 188.0,463.1 188.5,462.6 189.0,462.3 189.5,462.7 190.0,462.5 190.5,462.8 191.0,462.7 191.5,462.7 192.0,462.9 192.5,462.6 193.0,462.7 193.5,462.3 194.0,462.7 194.5,462.5 195.0,462.9 195.5,462.7 196.0,463.0 196.5,463.1 197.0,462.6 197.5,462.8 198.0,462.8 198.5,463.3 199.0,463.6 199.5,463.4 200.0,463.1 200.5,463.6 201.0,462.8 201.5,463.7 202.0,463.1 202.5,462.6 203.0,464.1 203.5,463.8 204.0,463.1 204.5,463.5 205.0,463.4 205.5,463.5 206.0,463.1 206.5,463.4 207.0,463.7 207.5,463.7 208.0,464.0 208.5,463.7 209.0,464.3 209.5,463.5 210.0,463.8 210.5,463.2 211.0,463.4 211.5,464.2 212.0,463.6 212.5,464.0 213.0,463.9 213.5,463.6 214.0,463.8 214.5,463.8 215.0,463.9 215.5,464.2 216.0,464.2 216.5,463.9 217.0,463.8 217.5,464.2 218.0,464.1 218.5,464.5 219.0,464.9 219.5,464.4 220.0,464.2 220.5,464.2 221.0,464.0 221.5,464.0 222.0,464.0 222.5,464.2 223.0,464.3 223.5,464.6 224.0,464.3 224.5,464.4 225.0,464.1 225.5,464.9 226.0,464.6 226.5,465.0 227.0,464.8 227.5,465.0 228.0,464.5 228.5,464.8 229.0,465.4 229.5,464.3 230.0,465.0 230.5,465.2 231.0,464.8 231.5,464.9 232.0,465.1 232.5,464.6 233.0,464.9 233.5,464.6 234.0,464.6 234.5,464.7 235.0,464.8 235.5,464.9 236.0,465.0 236.5,464.5 237.0,465.5 237.5,465.3 238.0,465.2 238.5,464.9 239.0,465.0 239.5,465.2 240.0,465.2 240.5,464.6 241.0,465.3 241.5,465.9 242.0,464.6 242.5,465.4 243.0,465.3 243.5,465.1 244.0,465.6 244.5,464.9 245.0,465.3 245.5,465.7 246.0,465.2 246.5,465.2 247.0,465.3 247.5,465.2 248.0,465.8 248.5,465.1 249.0,465.6 249.5,465.0 250.0,465.6 250.5,465.4 251.0,464.7 251.5,465.4 252.0,465.1 252.5,465.3 253.0,465.9 253.5,465.2 254.0,465.2 254.5,465.9 255.0,465.6 255.5,466.0 256.0,465.7 256.5,465.3 257.0,465.6 257.5,466.0 258.0,465.9 258.5,465.6 259.0,465.7 259.5,465.6 260.0,465.5 260.5,466.3 261.0,465.7 261.5,465.4 262.0,465.6 262.5,466.0 263.0,466.0 263.5,465.7 264.0,465.6 264.5,465.8 265.0,465.3 265.5,465.5 266.0,466.1 266.5,465.7 267.0,466.0 267.5,466.2 268.0,466.1 268.5,465.9 269.0,466.5 269.5,466.1 270.0,465.8 270.5,466.2 271.0,466.1 271.5,465.7 272.0,466.0 272.5,466.0 273.0,465.5 273.5,466.0 274.0,466.0 274.5,465.9 275.0,465.6 275.5,466.0 276.0,466.1 276.5,466.1 277.0,465.8 277.5,466.3 278.0,465.8 278.5,466.1 279.0,466.5 279.5,466.0 280.0,466.0 280.5,466.5 281.0,466.1 281.5,466.1 282.0,466.3 282.5,466.5 283.0,465.6 283.5,466.0 284.0,466.0 284.5,465.9 285.0,466.0 285.5,466.0 286.0,466.4 286.5,466.0 287.0,466.3 287.5,466.4 288.0,466.1 288.5,466.4 289.0,466.8 289.5,466.4 290.0,466.2 290.5,466.3 291.0,466.1 291.5,466.4 292.0,466.6 292.5,466.1 293.0,466.3 293.5,466.7 294.0,466.2 294.5,466.4 295.0,466.1 295.5,466.2 296.0,466.3 296.5,467.0 297.0,466.3 297.5,466.3 298.0,466.3 298.5,466.4 299.0,466.6 299.5,466.5 300.0,467.0 300.5,466.5 301.0,466.8 301.5,466.5 302.0,466.6 302.5,466.0 303.0,466.4 303.5,466.4 304.0,466.3 304.5,465.8 305.0,466.6 305.5,466.3 306.0,466.3 306.5,466.3 307.0,466.3 307.5,466.4 308.0,466.0 308.5,466.0 309.0,466.3 309.5,466.3 310.0,466.1 310.5,466.0 311.0,465.9 311.5,466.0 312.0,466.3 312.5,465.6 313.0,466.2 313.5,466.0 314.0,465.5 314.5,465.6 315.0,464.8 315.5,464.4 316.0,464.2 316.5,463.9 317.0,463.2 317.5,462.1 318.0,460.9 318.5,458.4 319.0,456.6 319.5,452.5 320.0,447.5 320.5,438.9 321.0,422.9 321.5,395.3 322.0,360.4 322.3,350.8 322.5,355.0 323.0,387.7 323.5,417.8 324.0,435.9 324.5,445.8 325.0,452.0 325.5,455.1 326.0,458.8 326.5,460.3 327.0,461.7 327.5,463.1 328.0,464.1 328.5,464.5 329.0,465.1 329.5,465.1 330.0,465.7 330.5,465.8 331.0,465.6 331.5,466.1 332.0,465.8 332.5,465.9 333.0,465.6 333.5,465.8 334.0,466.1 334.5,465.6 335.0,466.1 335.5,466.0 336.0,465.9 336.5,465.2 337.0,465.7 337.5,465.8 338.0,465.2 338.5,465.2 339.0,464.2 339.5,464.6 340.0,463.6 340.5,463.2 341.0,461.3 341.5,460.5 342.0,458.1 342.5,455.3 343.0,449.8 343.5,441.0 344.0,425.9 344.5,402.0 344.9,390.3 345.0,390.8 345.5,408.3 346.0,430.7 346.5,444.5 347.0,451.3 347.5,455.2 348.0,458.7 348.5,460.6 349.0,461.8 349.5,462.8 350.0,462.9 350.5,463.5 351.0,463.4 351.5,463.4 352.0,464.0 352.5,463.2 353.0,463.6 353.5,462.2 354.0,461.0 354.5,460.0 355.0,458.3 355.5,455.3 356.0,451.3 356.5,446.8 357.0,439.9 357.5,427.8 358.0,407.3 358.5,372.7 359.0,324.1 359.4,300.1 359.5,301.0 360.0,336.8 360.5,383.6 361.0,414.3 361.5,432.2 362.0,442.2 362.5,448.0 363.0,453.1 363.5,456.6 364.0,459.0 364.5,461.0 365.0,462.0 365.5,462.9 366.0,464.2 366.5,464.2 367.0,464.4 367.5,465.6 368.0,465.4 368.5,465.7 369.0,465.6 369.5,465.7 370.0,465.9 370.5,466.2 371.0,466.5 371.5,465.9 372.0,466.8 372.5,466.3 373.0,466.4 373.5,467.0 374.0,466.8 374.5,466.5 375.0,467.4 375.5,466.7 376.0,467.1 376.5,467.1 377.0,467.5 377.5,467.0 378.0,467.4 378.5,466.9 379.0,467.5 379.5,467.0 380.0,467.1 380.5,467.8 381.0,467.3 381.5,467.3 382.0,467.9 382.5,467.4 383.0,467.1 383.5,467.5 384.0,467.0 384.5,467.7 385.0,467.7 385.5,467.2 386.0,467.2 386.5,467.4 387.0,467.4 387.5,467.1 388.0,467.6 388.5,466.9 389.0,467.3 389.5,467.3 390.0,467.4 390.5,467.6 391.0,467.1 391.5,467.7 392.0,467.4 392.5,467.3 393.0,467.1 393.5,467.2 394.0,467.6 394.5,467.3 395.0,467.6 395.5,467.8 396.0,467.8 396.5,468.0 397.0,467.5 397.5,467.3 398.0,467.9 398.5,467.7 399.0,467.9 399.5,467.6 400.0,467.9 400.5,467.8 401.0,467.8 401.5,467.8 402.0,467.7 402.5,467.7 403.0,467.7 403.5,467.9 404.0,467.5 404.5,468.1 405.0,467.6 405.5,467.9 406.0,467.6 406.5,467.6 407.0,468.2 407.5,467.6 408.0,467.3 408.5,467.5 409.0,467.6 409.5,468.3 410.0,467.7 410.5,467.9 411.0,467.4 411.5,467.8 412.0,467.9 412.5,468.2 413.0,467.5 413.5,467.9 414.0,467.8 414.5,467.4 415.0,467.7 415.5,467.6 416.0,467.1 416.5,467.9 417.0,467.9 417.5,467.6 418.0,467.3 418.5,468.1 419.0,467.8 419.5,468.0 420.0,468.1 420.5,467.6 421.0,468.0 421.5,467.7 422.0,467.7 422.5,467.7 423.0,467.7 423.5,468.1 424.0,467.8 424.5,467.7 425.0,467.7 425.5,467.8 426.0,467.5 426.5,467.6 427.0,467.7 427.5,467.6 428.0,467.7 428.5,467.6 429.0,468.3 429.5,468.1 430.0,467.9 430.5,467.7 431.0,468.4 431.5,467.8 432.0,467.7 432.5,467.8 433.0,467.8 433.5,468.1 434.0,467.7 434.5,468.3 435.0,467.5 435.5,467.9 436.0,467.4 436.5,468.2 437.0,467.6 437.5,467.7 438.0,468.0 438.5,468.0 439.0,467.4 439.5,467.6 440.0,467.3 440.5,467.7 441.0,467.6 441.5,467.5 442.0,467.4 442.5,467.5 443.0,467.3 443.5,467.6 444.0,467.9 444.5,466.8 445.0,467.3 445.5,467.1 446.0,467.2 446.5,466.6 447.0,466.6 447.5,466.1 448.0,466.2 448.5,465.6 449.0,464.9 449.5,464.3 450.0,463.1 450.5,461.2 451.0,459.3 451.5,455.2 452.0,449.1 452.5,442.1 453.0,438.2 453.0,437.6 453.5,441.7 454.0,449.8 454.5,455.7 455.0,459.0 455.5,461.3 456.0,463.0 456.5,464.1 457.0,464.6 457.5,465.6 458.0,465.7 458.5,466.1 459.0,467.0 459.5,466.7 460.0,467.1 460.5,467.4 461.0,467.6 461.5,467.3 462.0,467.5 462.5,467.3 463.0,468.1 463.5,467.8 464.0,467.3 464.5,467.7 465.0,467.9 465.5,467.9 466.0,468.3 466.5,468.1 467.0,467.6 467.5,467.8 468.0,467.4 468.5,467.9 469.0,467.9 469.5,468.6 470.0,467.9 470.5,467.2 471.0,467.7 471.5,467.9 472.0,467.5 472.5,467.6 473.0,467.8 473.5,468.0 474.0,467.8 474.5,467.6 475.0,468.1 475.5,467.7 476.0,467.8 476.5,467.5 477.0,467.7 477.5,468.1 478.0,467.5 478.5,467.9 479.0,468.1 479.5,467.8 480.0,468.0 480.5,467.6 481.0,468.3 481.5,468.2 482.0,468.0 482.5,467.4 483.0,467.6 483.5,468.2 484.0,468.4 484.5,468.0 485.0,468.3 485.5,467.8 486.0,467.9 486.5,467.9 487.0,468.1 487.5,467.5 488.0,468.2 488.5,468.3 489.0,467.6 489.5,467.6 490.0,468.0 490.5,467.8 491.0,467.3 491.5,468.2 492.0,468.0 492.5,467.8 493.0,468.5 493.5,468.0 494.0,467.7 494.5,468.0 495.0,467.6 495.5,467.7 496.0,468.0 496.5,467.8 497.0,467.8 497.5,468.4 498.0,468.2 498.5,468.2 499.0,468.1 499.5,468.1 500.0,468.3 500.5,467.9 501.0,468.4 501.5,467.7 502.0,467.8 502.5,467.5 503.0,467.8 503.5,468.1 504.0,468.3 504.5,467.7 505.0,467.9 505.5,467.8 506.0,467.7 506.5,467.5 507.0,467.9 507.5,467.4 508.0,467.9 508.5,467.9 509.0,467.7 509.5,467.6 510.0,467.4 510.5,468.3 511.0,467.4 511.5,468.2 512.0,467.9 512.5,467.7 513.0,467.4 513.5,468.0 514.0,468.2 514.5,467.4 515.0,467.6 515.5,467.9 516.0,467.7 516.5,468.1 517.0,467.3 517.5,467.6 518.0,467.0 518.5,467.8 519.0,466.9 519.5,466.4 520.0,466.8 520.5,466.6 521.0,466.9 521.5,465.9 522.0,465.6 522.5,465.3 523.0,464.9 523.5,463.7 524.0,463.0 524.5,461.6 525.0,459.7 525.5,457.2 526.0,453.4 526.5,447.4 527.0,440.0 527.5,430.2 528.0,425.5 528.1,425.3 528.5,428.3 529.0,436.7 529.5,445.4 530.0,452.0 530.5,456.4 531.0,459.2 531.5,461.3 532.0,462.3 532.5,463.5 533.0,463.8 533.5,465.2 534.0,465.5 534.5,465.8 535.0,466.6 535.5,466.7 536.0,466.0 536.5,467.0 537.0,466.7 537.5,467.5 538.0,468.0 538.5,467.3 539.0,467.5 539.5,467.5 540.0,467.7 540.5,467.8 541.0,468.0 541.5,467.4 542.0,468.1 542.5,467.5 543.0,467.8 543.5,468.1 544.0,468.0 544.5,467.5 545.0,467.6 545.5,467.7 546.0,467.8 546.5,468.2 547.0,467.5 547.5,468.0 548.0,468.0 548.5,468.0 549.0,468.0 549.5,468.3 550.0,468.0 550.5,468.1 551.0,468.1 551.5,468.4 552.0,467.4 552.5,468.3 553.0,467.8 553.5,467.8 554.0,467.6 554.5,467.4 555.0,467.8 555.5,467.7 556.0,468.0 556.5,467.5 557.0,468.3 557.5,468.0 558.0,467.8 558.5,467.7 559.0,467.7 559.5,467.6 560.0,467.7 560.5,467.9 561.0,467.8 561.5,467.5 562.0,467.8 562.5,467.6 563.0,467.9 563.5,468.4 564.0,468.0 564.5,467.7 565.0,467.3 565.5,467.4 566.0,467.3 566.5,467.9 567.0,467.5 567.5,467.7 568.0,467.5 568.5,467.6 569.0,468.0 569.5,467.3 570.0,467.3 570.5,467.1 571.0,467.5 571.5,466.8 572.0,466.6 572.5,466.4 573.0,466.1 573.5,466.4 574.0,466.6 574.5,465.2 575.0,465.3 575.5,464.4 576.0,463.2 576.5,462.4 577.0,460.9 577.5,458.6 578.0,456.1 578.5,450.5 579.0,445.2 579.5,439.4 580.0,436.9 580.0,437.1 580.5,440.6 581.0,446.4 581.5,452.1 582.0,456.5 582.5,458.7 583.0,461.7 583.5,463.3 584.0,464.0 584.5,464.8 585.0,464.7 585.5,465.5 586.0,465.7 586.5,466.1 587.0,466.8 587.5,466.6 588.0,466.9 588.5,466.6 589.0,467.2 589.5,467.4 590.0,467.2 590.5,467.3 591.0,468.1 591.5,467.2 592.0,467.3 592.5,467.4 593.0,468.0 593.5,468.3 594.0,467.8 594.5,467.5 595.0,467.6 595.5,468.0 596.0,467.5 596.5,468.1 597.0,468.1 597.5,467.7 598.0,467.9 598.5,467.9 599.0,468.1 599.5,467.4 600.0,468.0 600.5,467.5 601.0,467.3 601.5,467.5 602.0,467.4 602.5,467.1 603.0,466.8 603.5,466.9 604.0,467.5 604.5,467.4 605.0,466.9 605.5,466.8 606.0,465.9 606.5,465.6 607.0,465.0 607.5,463.7 608.0,462.6 608.5,461.7 609.0,460.9 609.1,460.7 609.5,461.3 610.0,462.1 610.5,463.6 611.0,464.3 611.5,464.9 612.0,465.5 612.5,465.7 613.0,465.7 613.5,465.9 614.0,466.2 614.5,466.1 615.0,466.2 615.5,465.2 616.0,465.3 616.5,465.0 617.0,464.8 617.5,464.1 618.0,463.5 618.5,462.9 619.0,461.6 619.5,459.5 620.0,457.8 620.5,454.4 621.0,449.8 621.5,445.8 622.0,442.2 622.2,442.4 622.5,442.6 623.0,445.7 623.5,450.2 624.0,454.0 624.5,457.3 625.0,459.4 625.5,460.8 626.0,461.6 626.5,461.4 627.0,462.7 627.5,462.3 628.0,462.8 628.5,462.7 629.0,461.7 629.5,460.4 630.0,458.9 630.5,456.9 631.0,454.7 631.5,453.5 631.7,453.4 632.0,454.4 632.5,456.0 633.0,458.6 633.5,460.4 634.0,462.2 634.5,463.4 635.0,464.5 635.5,465.2 636.0,465.6 636.5,465.7 637.0,466.0 637.5,466.9 638.0,466.6 638.5,466.8 639.0,467.4 639.5,467.5 640.0,467.4 640.5,467.3 641.0,468.1 641.5,467.6 642.0,467.7 642.5,467.6 643.0,467.3 643.5,467.3 644.0,467.9 644.5,467.9 645.0,467.7 645.5,467.5 646.0,467.4 646.5,467.8 647.0,467.5 647.5,468.1 648.0,468.2 648.5,468.7 649.0,468.1 649.5,467.7 650.0,467.7 650.5,466.9 651.0,467.7 651.5,467.9 652.0,468.2 652.5,468.1 653.0,468.1 653.5,467.9 654.0,468.0 654.5,468.2 655.0,467.5 655.5,467.7 656.0,467.4 656.5,468.1 657.0,468.0 657.5,467.7 658.0,467.0 658.5,467.2 659.0,466.9 659.5,466.8 660.0,466.5 660.3,466.7 660.5,466.5 661.0,466.9 661.5,467.0 662.0,467.1 662.5,467.3 663.0,467.4 663.5,467.8 664.0,467.6 664.5,467.9 665.0,467.7 665.5,467.4 666.0,468.1 666.5,467.6 667.0,468.1 667.5,468.1 668.0,467.5 668.5,467.7 669.0,467.9 669.5,467.8 670.0,467.7 670.5,468.2 671.0,468.0 671.5,468.2 672.0,467.9 672.5,468.1 673.0,467.9 673.5,468.1 674.0,468.2 674.5,468.1 675.0,467.9 675.5,467.8 676.0,468.1 676.5,468.2 677.0,468.0 677.5,467.9 678.0,468.2 678.5,468.8 679.0,468.0 679.5,468.2 680.0,468.2 680.5,467.4 681.0,468.1 681.5,467.9 682.0,468.4 682.5,468.0 683.0,467.8 683.5,468.0 684.0,468.1 684.5,467.9 685.0,468.0 685.5,467.6 686.0,467.9 686.5,468.2 687.0,468.5 687.5,468.1 688.0,468.0 688.5,468.2 689.0,468.1 689.5,468.3 690.0,468.1 690.5,467.7 691.0,467.7 691.5,467.6 692.0,467.6 692.5,467.4 693.0,467.0 693.5,466.5 694.0,466.6 694.5,466.0 695.0,466.3 695.5,465.9 696.0,465.2 696.5,465.7 696.7,465.7 697.0,465.5 697.5,466.1 698.0,466.5 698.5,465.9 699.0,466.9 699.5,467.0 700.0,467.2 700.5,467.5 701.0,467.2 701.5,467.3 702.0,467.4 702.5,467.5 703.0,467.7 703.5,467.4 704.0,467.5 704.5,468.0 705.0,467.9 705.5,468.0 706.0,467.4 706.5,467.8 707.0,467.8 707.5,468.0 708.0,467.9 708.5,468.3 709.0,468.0 709.5,468.1 710.0,468.1 710.5,468.3 711.0,468.0 711.5,468.4 712.0,468.2 712.5,468.1 713.0,468.1 713.5,468.3 714.0,468.4 714.5,468.4 715.0,468.2 715.5,468.4 716.0,468.2 716.5,468.5 717.0,468.1 717.5,467.6 718.0,468.5 718.5,468.2 719.0,467.8 719.5,468.1 720.0,467.9 720.5,468.7 721.0,468.3"/>
  <path d="M108.2 472.5V475 M124.7 472.5V475 M141.3 472.5V476 M157.9 472.5V475 M174.4 472.5V475 M191.0 472.5V475 M207.6 472.5V475 M224.2 472.5V476 M240.7 472.5V475 M257.3 472.5V475 M273.9 472.5V475 M290.5 472.5V475 M307.0 472.5V476 M323.6 472.5V475 M340.2 472.5V475 M356.8 472.5V475 M373.3 472.5V475 M389.9 472.5V476 M406.5 472.5V475 M423.1 472.5V475 M439.6 472.5V475 M456.2 472.5V475 M472.8 472.5V476 M489.4 472.5V475 M505.9 472.5V475 M522.5 472.5V475 M539.1 472.5V475 M555.7 472.5V476 M572.2 472.5V475 M588.8 472.5V475 M605.4 472.5V475 M621.9 472.5V475 M638.5 472.5V476 M655.1 472.5V475 M671.7 472.5V475 M688.2 472.5V475 M704.8 472.5V475 M721.4 472.5V476" stroke="#a0eeee" stroke-width="1"/>
</svg>
<!-- right column -->
<div class="a" style="left:721px;top:311px;width:18px;height:176px;background:#f0f0f0"></div>
<div class="a" style="left:721px;top:471px;width:18px;height:15px;background:#04847f"></div><div class="a" style="left:721px;top:486px;width:18px;height:1px;background:#bff"></div>
<div class="a" style="left:722px;top:312px;width:15px;height:10px;background:#f0f0f0;border:1px solid;border-color:#fff #808080 #808080 #fff"></div><svg class="a" style="left:722px;top:312px" width="15" height="10" viewBox="0 0 15 10"><path d="M2 8L5 4L7 6L10 3L13 8" fill="none" stroke="#c04040" stroke-width="0.8"/><path d="M2 8.5H13" stroke="#444" stroke-width="1"/></svg>
<div class="a" style="left:722px;top:322px;width:15px;height:16px;background:#f0f0f0;border:1px solid;border-color:#fff #808080 #808080 #fff"></div><svg class="a" style="left:722px;top:322px" width="15" height="16" viewBox="0 0 15 16"><g transform="translate(-0.6,0) scale(0.9)"><circle cx="9" cy="9" r="6.8" fill="#178a2a" stroke="#0a3a10" stroke-width="0.8"/><text x="9" y="13" font-family="Liberation Sans" font-size="10" font-weight="bold" fill="#fff" text-anchor="middle">?</text></g></svg>
<div class="a" style="left:722px;top:338px;width:15px;height:16px;background:#f0f0f0;border:1px solid;border-color:#fff #808080 #808080 #fff"></div><svg class="a" style="left:722px;top:338px" width="15" height="16" viewBox="0 0 15 16"><g transform="translate(-0.6,0) scale(0.9)"><path d="M3.5 9L7.5 5.5V12.5Z M14.5 9L10.5 5.5V12.5Z" fill="#2030c0"/><path d="M7 9H11" stroke="#2030c0" stroke-width="1.8"/><path d="M9 6V12" stroke="#2030c0" stroke-width="1.2"/><path d="M9 3.5L7.5 6H10.5Z M9 14.5L7.5 12H10.5Z" fill="#2030c0"/></g></svg>
<div class="a" style="left:722px;top:355px;width:15px;height:16px;background:#f0f0f0;border:1px solid;border-color:#fff #808080 #808080 #fff"></div><svg class="a" style="left:722px;top:355px" width="15" height="16" viewBox="0 0 15 16"><g transform="translate(-0.6,0) scale(0.9)"><path d="M4 6H6M12 6H14" stroke="#2030c0" stroke-width="2"/><path d="M4 8H14" stroke="#2030c0" stroke-width="1"/><path d="M3 13H15" stroke="#000" stroke-width="1.5"/></g></svg>
<div class="a" style="left:722px;top:371px;width:15px;height:16px;background:#f0f0f0;border:1px solid;border-color:#fff #808080 #808080 #fff"></div><svg class="a" style="left:722px;top:371px" width="15" height="16" viewBox="0 0 15 16"><g transform="translate(-0.6,0) scale(0.9)"><path d="M4 9L9 5L14 9M4 13L9 9L14 13" fill="none" stroke="#a040c0" stroke-width="1.5"/></g></svg>
<div class="a" style="left:722px;top:388px;width:15px;height:16px;background:#f0f0f0;border:1px solid;border-color:#fff #808080 #808080 #fff"></div><svg class="a" style="left:722px;top:388px" width="15" height="16" viewBox="0 0 15 16"><g transform="translate(-0.6,0) scale(0.9)"><path d="M3 4H15" stroke="#000" stroke-width="1.5"/><path d="M9 5L5 9.5H13Z" fill="#000"/><path d="M9 9V15" stroke="#000" stroke-width="2"/></g></svg>
<div class="a" style="left:722px;top:404px;width:15px;height:16px;background:#f0f0f0;border:1px solid;border-color:#fff #808080 #808080 #fff"></div><svg class="a" style="left:722px;top:404px" width="15" height="16" viewBox="0 0 15 16"><g transform="translate(-0.6,0) scale(0.9)"><path d="M9 3L5 7.5H13Z M9 15L5 10.5H13Z" fill="#000"/></g></svg>
<div class="a" style="left:722px;top:421px;width:15px;height:16px;background:#f0f0f0;border:1px solid;border-color:#fff #808080 #808080 #fff"></div><svg class="a" style="left:722px;top:421px" width="15" height="16" viewBox="0 0 15 16"><g transform="translate(-0.6,0) scale(0.9)"><path d="M3 9L7.5 5V13Z M15 9L10.5 5V13Z" fill="#000"/><path d="M7 9H11" stroke="#000" stroke-width="1.5"/></g></svg>
<div class="a" style="left:722px;top:437px;width:15px;height:16px;background:#f0f0f0;border:1px solid;border-color:#fff #808080 #808080 #fff"></div><svg class="a" style="left:722px;top:437px" width="15" height="16" viewBox="0 0 15 16"><g transform="translate(-0.6,0) scale(0.9)"><path d="M3 9L7.5 5V13Z M15 9L10.5 5V13Z" fill="#2030d0"/><path d="M7 9H11" stroke="#2030d0" stroke-width="1.5"/></g></svg>
<div class="a" style="left:722px;top:454px;width:15px;height:16px;background:#f0f0f0;border:1px solid;border-color:#fff #808080 #808080 #fff"></div><svg class="a" style="left:722px;top:454px" width="15" height="16" viewBox="0 0 15 16"><g transform="translate(-0.6,0) scale(0.9)"><rect x="5" y="5" width="8" height="8" fill="#000"/></g></svg>
<!-- axis labels -->
<div class="t" style="left:135.3px;top:477px;width:12px;text-align:center;font-size:10px;color:#a0eeee">10</div>
<div class="t" style="left:218.2px;top:477px;width:12px;text-align:center;font-size:10px;color:#a0eeee">20</div>
<div class="t" style="left:301.0px;top:477px;width:12px;text-align:center;font-size:10px;color:#a0eeee">30</div>
<div class="t" style="left:383.9px;top:477px;width:12px;text-align:center;font-size:10px;color:#a0eeee">40</div>
<div class="t" style="left:466.8px;top:477px;width:12px;text-align:center;font-size:10px;color:#a0eeee">50</div>
<div class="t" style="left:549.7px;top:477px;width:12px;text-align:center;font-size:10px;color:#a0eeee">60</div>
<div class="t" style="left:632.5px;top:477px;width:12px;text-align:center;font-size:10px;color:#a0eeee">70</div>
<div class="t" style="left:88px;top:421px;font-size:9.5px;letter-spacing:0.35px;color:#a0eeee;transform:rotate(-90deg);transform-origin:0 0">Intensity(Counts)</div>
<!-- left panel -->
<div class="a" style="left:0;top:324px;width:83px;height:163px;background:#f0f0f0"></div>
<div class="a" style="left:0;top:324px;width:83px;height:17px;background:#fff;border-bottom:1px solid #a0a0a0"></div>
<svg class="a" style="left:0;top:324px" width="83" height="17" viewBox="0 0 83 17"><path d="M0 7.5Q6 11 20 11.3L36 11.5L36.5 1L37.5 11.5L41 11.5L41.5 1L42.3 11.5L43.3 11.5L43.8 1L44.6 11.5L59.2 11.5L59.7 1L60.3 11.5L72 11.5L72.5 1L73 11.5L80.5 11.5L81 1" fill="none" stroke="#111" stroke-width="1.3"/><path d="M5 1.5H83" stroke="#c4c4c4" stroke-width="1"/></svg>
<div class="a" style="left:1px;top:343px;width:66px;height:14px;background:#f0f0f0;border:1px solid;border-color:#fff #a0a0a0 #a0a0a0 #fff"></div>
<div class="t" style="left:5.5px;top:346px;font-size:9.5px;color:#111;transform:scaleX(0.86);transform-origin:0 0">12 Files</div>
<svg class="a" style="left:43px;top:345px" width="23" height="10" viewBox="0 0 23 10"><rect x="1" y="1" width="9" height="8" rx="2.5" fill="#2fb8e0" stroke="#1a6080" stroke-width="0.9"/><path d="M3.5 4.5L5.5 6.5L8 3" stroke="#fff" stroke-width="1" fill="none"/><path d="M12.5 2.5H16L17 3.5H21.5V9H12.5Z" fill="#f5ea40" stroke="#6a5a10" stroke-width="0.9"/></svg>
<div class="a" style="left:0;top:357px;width:68px;height:114px;background:#fff;overflow:hidden">
<div class="t" style="left:3px;top:0.2px;font-size:9.5px;color:#000;-webkit-text-stroke:0.2px #000;transform:scaleX(0.93);transform-origin:0 0">D8A操作指南...</div>
<div class="t" style="left:3px;top:11.2px;font-size:9.5px;color:#000;-webkit-text-stroke:0.2px #000;transform:scaleX(0.93);transform-origin:0 0">MDIJade6.5使...</div>
<div class="t" style="left:3px;top:22.3px;font-size:9.5px;color:#000;-webkit-text-stroke:0.2px #000;transform:scaleX(0.93);transform-origin:0 0">X射线衍射实...</div>
<div class="t" style="left:3px;top:33.4px;font-size:9.5px;color:#000;-webkit-text-stroke:0.2px #000;transform:scaleX(0.93);transform-origin:0 0">X射线衍射实...</div>
<div class="t" style="left:3px;top:44.4px;font-size:9.5px;color:#000;-webkit-text-stroke:0.2px #000;transform:scaleX(0.93);transform-origin:0 0">X射线衍射实...</div>
<div class="t" style="left:3px;top:55.5px;font-size:9.5px;color:#000;-webkit-text-stroke:0.2px #000;transform:scaleX(0.93);transform-origin:0 0">X射线衍射实...</div>
<div class="t" style="left:3px;top:66.5px;font-size:9.5px;color:#000;-webkit-text-stroke:0.2px #000;transform:scaleX(0.93);transform-origin:0 0">X射线衍射实...</div>
<div class="t" style="left:3px;top:77.6px;font-size:9.5px;color:#000;-webkit-text-stroke:0.2px #000;transform:scaleX(0.93);transform-origin:0 0">X射线衍射实...</div>
<div class="t" style="left:3px;top:88.6px;font-size:9.5px;color:#000;-webkit-text-stroke:0.2px #000;transform:scaleX(0.93);transform-origin:0 0">X射线衍射实...</div>
<div class="t" style="left:3px;top:99.7px;font-size:9.5px;color:#000;-webkit-text-stroke:0.2px #000;transform:scaleX(0.93);transform-origin:0 0">X射线衍射实...</div>
<div class="t" style="left:3px;top:110.7px;font-size:9.5px;color:#000;-webkit-text-stroke:0.2px #000;transform:scaleX(0.93);transform-origin:0 0">X射线衍射实...</div>
</div>
<div class="a" style="left:68px;top:343px;width:15px;height:128px;background:#f0f0f0"></div>
<div class="a" style="left:69px;top:356px;width:13px;height:83px;background:#cdcdcd"></div>
<svg class="a" style="left:70px;top:346px" width="10" height="6" viewBox="0 0 10 6"><path d="M1 5L5 1L9 5" fill="none" stroke="#606060" stroke-width="1.3"/></svg>
<svg class="a" style="left:70px;top:462px" width="10" height="6" viewBox="0 0 10 6"><path d="M1 1L5 5L9 1" fill="none" stroke="#606060" stroke-width="1.3"/></svg>
<div class="a" style="left:0;top:471px;width:83px;height:16px;background:#f0f0f0"></div>
<div class="a" style="left:14px;top:473px;width:25px;height:10px;background:#cdcdcd"></div>
<svg class="a" style="left:4px;top:474px" width="6" height="9" viewBox="0 0 6 9"><path d="M5 1L1 4.5L5 8" fill="none" stroke="#606060" stroke-width="1.3"/></svg>
<svg class="a" style="left:59px;top:474px" width="6" height="9" viewBox="0 0 6 9"><path d="M1 1L5 4.5L1 8" fill="none" stroke="#606060" stroke-width="1.3"/></svg>
<!-- status bar -->
<div id="status" class="a">
<div class="sb" style="left:1.0px;width:72.0px;color:#111"><span>Raw Pattern</span></div>
<div class="sb" style="left:75.0px;width:71.0px;color:#111"><span>0 Peaks</span></div>
<div class="sb" style="left:148.5px;width:61.5px;color:#111"><span>2T=5.955</span></div>
<div class="sb" style="left:213.0px;width:62.0px;color:#111"><span>d=14.828</span></div>
<div class="sb" style="left:275.0px;width:59.5px;color:#111"><span>I=4684</span></div>
<div class="sb" style="left:337.0px;width:64.5px;color:#111"><span>Two-Theta</span></div>
<div class="sb" style="left:404.6px;width:23.0px;color:#939393"><span>SAV</span></div>
<div class="sb" style="left:429.1px;width:23.0px;color:#939393"><span>PKS</span></div>
<div class="sb" style="left:453.5px;width:23.0px;color:#939393"><span>DSP</span></div>
<div class="sb" style="left:478.0px;width:23.0px;color:#939393"><span>PDF</span></div>
<div class="sb" style="left:502.4px;width:23.0px;color:#939393"><span>PFT</span></div>
<div class="sb" style="left:526.9px;width:23.0px;color:#939393"><span>RPT</span></div>
<div class="sb" style="left:551.3px;width:23.0px;color:#939393"><span>PID</span></div>
<div class="sb" style="left:575.8px;width:23.0px;color:#939393"><span>SZS</span></div>
<div class="sb" style="left:600.2px;width:23.0px;color:#939393"><span>KSI</span></div>
<div class="sb" style="left:624.6px;width:23.0px;color:#939393"><span>FIT</span></div>
<div class="sb" style="left:649.1px;width:23.0px;color:#939393"><span>2TH</span></div>
<div class="sb" style="left:673.5px;width:23.0px;color:#939393"><span>ABC</span></div>
<div class="sb" style="left:698.0px;width:23.0px;color:#939393"><span>RRP</span></div>
<div class="sb" style="left:722.5px;width:20px;text-align:left;padding-left:3px;color:#111"><span style="transform:none;font-size:10.5px">LC</span></div><div class="a" style="left:738px;top:0;width:1px;height:13px;background:#222"></div>
</div>
<!-- menu dropdown -->
<div id="menu" class="a">
<div class="t mt" style="left:26px;top:5.50px;color:#111">Patterns...</div>
<div class="t mt" style="right:15px;top:5.50px;color:#111">Ctrl+O</div>
<div class="t mt" style="left:26px;top:23.00px;color:#111">Thumbnail...</div>
<div class="t mt" style="right:15px;top:23.00px;color:#111">Ctrl+T</div>
<div class="t mt" style="left:26px;top:40.50px;color:#111">Recall File...</div>
<div class="t mt" style="right:15px;top:40.50px;color:#111">Ctrl+F</div>
<div class="t mt" style="left:26px;top:57.10px;color:#111">Reload File</div>
<div class="t mt" style="right:15px;top:57.10px;color:#111">Alt+Bksp</div>
<div class="sep" style="top:73.5px"></div>
<div class="t mt" style="left:26px;top:80.80px;color:#111">Project...</div>
<div class="t mt" style="right:15px;top:80.80px;color:#111">Ctrl+U</div>
<div class="mi hl" style="top:94.0px"></div>
<div class="t mt" style="left:26px;top:98.20px;color:#111">Read...</div>
<div class="t mt" style="right:15px;top:98.20px;color:#111">Ctrl+R</div>
<div class="t mt" style="left:26px;top:115.30px;color:#111">Xplorer...</div>
<div class="t mt" style="right:15px;top:115.30px;color:#111">Ctrl+X</div>
<div class="sep" style="top:130.8px"></div>
<div class="t mt" style="left:26px;top:138.60px;color:#a0a0a0">Load</div>
<svg class="a" style="left:187px;top:139.0px" width="5" height="8" viewBox="0 0 5 8"><path d="M1 1L4 4L1 7" fill="none" stroke="#c0c0c0" stroke-width="0.9"/></svg>
<div class="t mt" style="left:26px;top:155.60px;color:#111">Save</div>
<svg class="a" style="left:187px;top:156.0px" width="5" height="8" viewBox="0 0 5 8"><path d="M1 1L4 4L1 7" fill="none" stroke="#555" stroke-width="0.9"/></svg>
<div class="t mt" style="left:26px;top:173.20px;color:#111">Save in XML</div>
<svg class="a" style="left:187px;top:173.6px" width="5" height="8" viewBox="0 0 5 8"><path d="M1 1L4 4L1 7" fill="none" stroke="#555" stroke-width="0.9"/></svg>
<div class="sep" style="top:188.5px"></div>
<div class="t mt" style="left:26px;top:196.00px;color:#111">Print</div>
<svg class="a" style="left:187px;top:196.4px" width="5" height="8" viewBox="0 0 5 8"><path d="M1 1L4 4L1 7" fill="none" stroke="#555" stroke-width="0.9"/></svg>
<div class="t mt" style="left:26px;top:213.40px;color:#111">Print Setup...</div>
<div class="t mt" style="right:15px;top:213.40px;color:#111">Ctrl+S</div>
<div class="t mt" style="left:26px;top:230.20px;color:#111">* Microsoft Print ...</div>
<div class="sep" style="top:246.1px"></div>
<div class="t mt" style="left:26px;top:253.90px;color:#111">Exit</div>
<div class="t mt" style="right:15px;top:253.90px;color:#111">Ctrl+E</div>
<div class="t mt" style="left:26px;top:270.10px;color:#111">Quit</div>
<div class="t mt" style="right:15px;top:270.10px;color:#111">Ctrl+Q</div>
</div>
</body></html>
